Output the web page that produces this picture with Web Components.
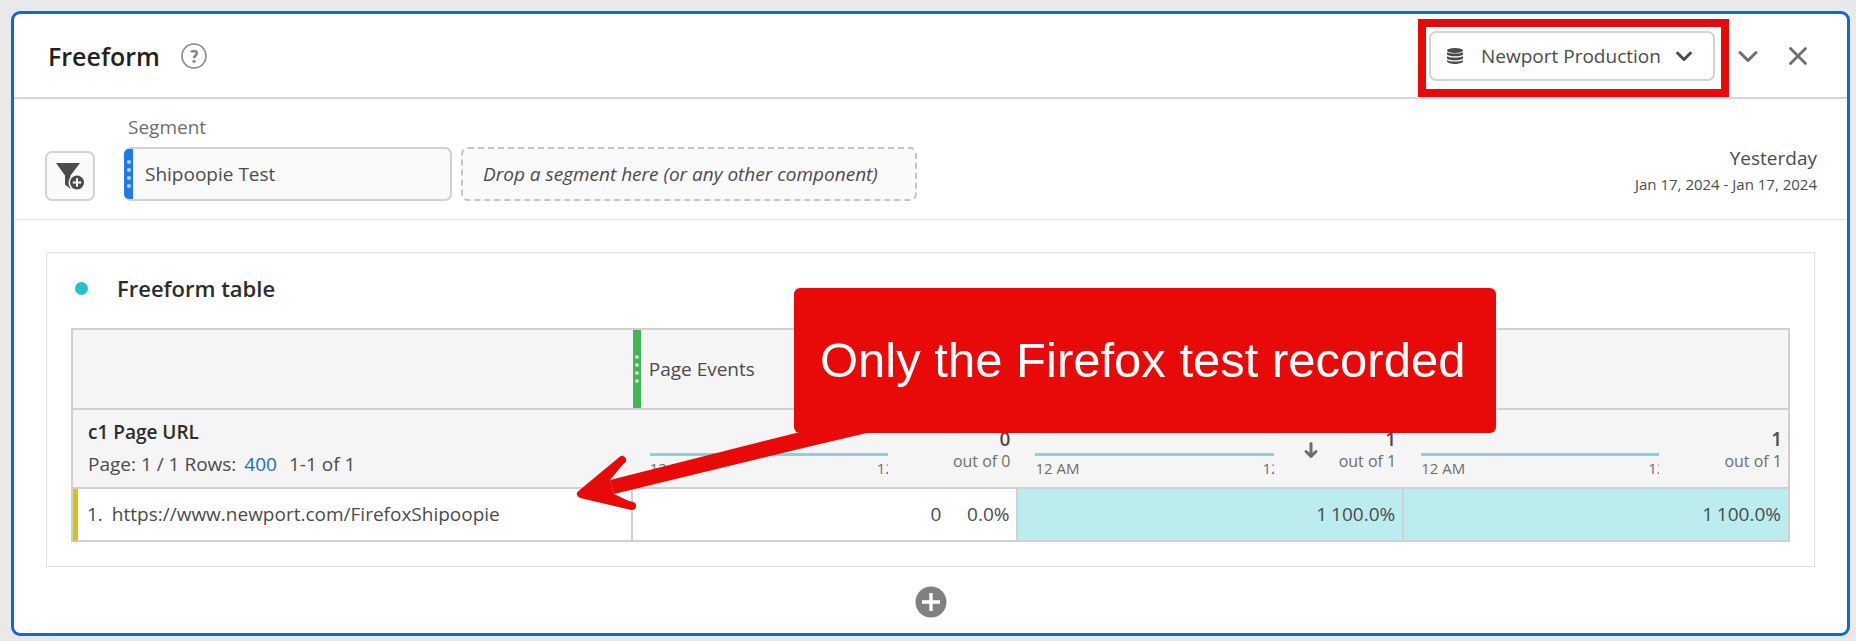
<!DOCTYPE html>
<html lang="en">
<head>
<meta charset="utf-8">
<meta name="viewport" content="width=device-width, initial-scale=1">
<title>Freeform</title>
<style>
    body {
        margin: 0;
        padding: 11px 6px 4px 11px;
        background: #e9e9e9;
        color: #4b4b4b;
        font-family: "Open Sans", "Noto Sans", sans-serif;
        font-size: 19px;
        line-height: 24px;
    }
</style>
</head>
<body>
<workspace-panel>
    <panel-header slot="header" heading="Freeform">
        <suite-picker suite="Newport Production"></suite-picker>
    </panel-header>
    <segment-bar slot="segments">
        <segment-chip>Shipoopie Test</segment-chip>
        <span slot="range">Yesterday</span>
        <span slot="dates">Jan 17, 2024 - Jan 17, 2024</span>
    </segment-bar>
    <viz-card heading="Freeform table">
        <freeform-table></freeform-table>
        <callout-note slot="note">Only the Firefox test recorded</callout-note>
    </viz-card>
</workspace-panel>

<script>
class WorkspacePanel extends HTMLElement {
    constructor() {
        super();
        this.attachShadow({ mode: 'open' });
    }

    connectedCallback() {
        this.shadowRoot.innerHTML = `
            <style>
                :host {
                    display: block;
                    background: #fff;
                    border: 3px solid #1268d3;
                    border-radius: 9px;
                }
                .content {
                    padding: 32px 32px 0;
                }
                .footer {
                    display: flex;
                    justify-content: center;
                    padding: 19px 0 15px;
                }
                button {
                    display: flex;
                    padding: 0;
                    border: none;
                    background: none;
                    cursor: pointer;
                }
            </style>
            <slot name="header"></slot>
            <slot name="segments"></slot>
            <div class="content"><slot></slot></div>
            <div class="footer">
                <button aria-label="Add visualization">
                    <svg width="32" height="32" viewBox="0 0 32 32">
                        <circle cx="16" cy="16" r="15.5" fill="#808080"/>
                        <path d="M16 7v18M7 16h18" stroke="#fff" stroke-width="3.4"/>
                    </svg>
                </button>
            </div>
        `;
    }
}
customElements.define('workspace-panel', WorkspacePanel);

class PanelHeader extends HTMLElement {
    constructor() {
        super();
        this.attachShadow({ mode: 'open' });
    }

    connectedCallback() {
        const heading = this.getAttribute('heading');

        this.shadowRoot.innerHTML = `
            <style>
                :host {
                    display: flex;
                    align-items: center;
                    padding: 17px 37px 16px 34px;
                    border-bottom: 2px solid #d6d6d6;
                }
                h1 {
                    margin: 0 20px 0 0;
                    font-size: 25px;
                    line-height: 32px;
                    font-weight: 600;
                    color: #222;
                }
                button {
                    display: flex;
                    padding: 0;
                    border: none;
                    background: none;
                    cursor: pointer;
                }
                .actions {
                    display: flex;
                    align-items: center;
                    margin-left: auto;
                }
                .collapse {
                    margin: 0 26px 0 21px;
                }
            </style>
            <h1>${heading}</h1>
            <button aria-label="Help">
                <svg width="28" height="28" viewBox="0 0 28 28" fill="none" stroke="#868686">
                    <circle cx="14" cy="14" r="12" stroke-width="1.6"/>
                    <path d="M11 10.2c.8-.9 1.8-1.3 3-1.3 1.7 0 2.9.9 2.9 2.4 0 2.1-2.9 2.3-2.9 5" stroke-width="2.5"/>
                    <circle cx="14" cy="19.3" r="1.6" fill="#868686" stroke="none"/>
                </svg>
            </button>
            <div class="actions">
                <slot></slot>
                <button class="collapse" aria-label="Collapse">
                    <svg width="24" height="24" viewBox="0 0 24 24" fill="none" stroke="#6e6e6e" stroke-width="3" stroke-linecap="round" stroke-linejoin="round">
                        <path d="M4 8.5l8 8 8-8"/>
                    </svg>
                </button>
                <button aria-label="Close">
                    <svg width="24" height="24" viewBox="0 0 24 24" fill="none" stroke="#6e6e6e" stroke-width="2.8" stroke-linecap="round">
                        <path d="M4.5 4.5l15 15M19.5 4.5l-15 15"/>
                    </svg>
                </button>
            </div>
        `;
    }
}
customElements.define('panel-header', PanelHeader);

class SuitePicker extends HTMLElement {
    constructor() {
        super();
        this.attachShadow({ mode: 'open' });
    }

    connectedCallback() {
        const suite = this.getAttribute('suite');

        this.shadowRoot.innerHTML = `
            <style>
                :host {
                    display: block;
                    position: relative;
                }
                select {
                    appearance: none;
                    box-sizing: border-box;
                    width: 286px;
                    height: 50px;
                    padding: 0 50px 0 50px;
                    border: 2px solid #d3d3d3;
                    border-radius: 7px;
                    background: #fff;
                    color: #4b4b4b;
                    font: inherit;
                    cursor: pointer;
                }
                svg {
                    position: absolute;
                    top: 50%;
                    transform: translateY(-50%);
                    pointer-events: none;
                }
                .stack {
                    left: 18px;
                }
                .arrow {
                    right: 21px;
                }
                /* red frame that points out the selected suite */
                .frame {
                    position: absolute;
                    inset: -12px -14px -16px -11px;
                    border: 8px solid #e80909;
                    pointer-events: none;
                }
            </style>
            <select aria-label="Report suite">
                <option>${suite}</option>
            </select>
            <svg class="stack" width="16" height="16" viewBox="0 0 16 16" fill="#4b4b4b">
                <ellipse cx="8" cy="2.5" rx="8" ry="2.5"/>
                <path d="M0 4.3c2 1.7 14 1.7 16 0v2.2c-1.5 2.4-14.5 2.4-16 0z"/>
                <path d="M0 8.3c2 1.8 14 1.8 16 0v2.2c-1.5 2.4-14.5 2.4-16 0z"/>
                <path d="M0 12.2c2 1.8 14 1.8 16 0v1.3c-1.5 3.3-14.5 3.3-16 0z"/>
            </svg>
            <svg class="arrow" width="20" height="20" viewBox="0 0 20 20" fill="none" stroke="#4b4b4b" stroke-width="3" stroke-linecap="round" stroke-linejoin="round">
                <path d="M3.5 7l6.5 6.5L16.5 7"/>
            </svg>
            <div class="frame"></div>
        `;
    }
}
customElements.define('suite-picker', SuitePicker);

class SegmentBar extends HTMLElement {
    constructor() {
        super();
        this.attachShadow({ mode: 'open' });
    }

    connectedCallback() {
        this.shadowRoot.innerHTML = `
            <style>
                :host {
                    display: flex;
                    align-items: flex-end;
                    padding: 12px 30px 18px 31px;
                    border-bottom: 1px solid #e4e4e4;
                }
                .filter {
                    box-sizing: border-box;
                    display: flex;
                    align-items: center;
                    justify-content: center;
                    width: 50px;
                    height: 50px;
                    margin-right: 29px;
                    padding: 0;
                    border: 2px solid #d3d3d3;
                    border-radius: 7px;
                    background: #fafafa;
                    cursor: pointer;
                }
                .label {
                    padding: 4px 0 8px 4px;
                    color: #6e6e6e;
                }
                .drop {
                    box-sizing: border-box;
                    margin-left: 9px;
                    padding: 13px 37px 13px 20px;
                    border: 2px dashed #c4c4c4;
                    border-radius: 7px;
                    background: #fafafa;
                    font-style: italic;
                }
                .range {
                    display: flex;
                    flex-direction: column;
                    margin-left: auto;
                    padding-bottom: 3px;
                    text-align: right;
                }
                .dates {
                    font-size: 15px;
                    line-height: 28px;
                }
            </style>
            <button class="filter" aria-label="Add segment">
                <svg width="30" height="30" viewBox="0 0 30 30">
                    <path d="M1 2h24l-9.5 12.5V28L10 23.5v-9z" fill="#4b4b4b"/>
                    <circle cx="22" cy="21.5" r="8.5" fill="#fafafa"/>
                    <circle cx="22" cy="21.5" r="7" fill="#4b4b4b"/>
                    <path d="M22 17.3v8.4M17.8 21.5h8.4" stroke="#fff" stroke-width="2"/>
                </svg>
            </button>
            <div>
                <div class="label">Segment</div>
                <slot></slot>
            </div>
            <div class="drop">Drop a segment here (or any other component)</div>
            <div class="range">
                <slot name="range"></slot>
                <div class="dates"><slot name="dates"></slot></div>
            </div>
        `;
    }
}
customElements.define('segment-bar', SegmentBar);

class SegmentChip extends HTMLElement {
    constructor() {
        super();
        this.attachShadow({ mode: 'open' });
    }

    connectedCallback() {
        this.shadowRoot.innerHTML = `
            <style>
                :host {
                    box-sizing: border-box;
                    display: flex;
                    width: 328px;
                    height: 54px;
                    border: 2px solid #d0d0d0;
                    border-left: none;
                    border-radius: 7px;
                    background: #fafafa;
                    line-height: 50px;
                }
                .handle {
                    display: flex;
                    flex-direction: column;
                    justify-content: center;
                    align-items: center;
                    gap: 4px;
                    width: 9px;
                    margin-right: 12px;
                    border-radius: 5px 0 0 5px;
                    background: #1f7ae8;
                }
                i {
                    width: 4px;
                    height: 4px;
                    border-radius: 50%;
                    background: #a9d0fb;
                }
            </style>
            <div class="handle"><i></i><i></i><i></i><i></i></div>
            <slot></slot>
        `;
    }
}
customElements.define('segment-chip', SegmentChip);

class VizCard extends HTMLElement {
    constructor() {
        super();
        this.attachShadow({ mode: 'open' });
    }

    connectedCallback() {
        const heading = this.getAttribute('heading');

        this.shadowRoot.innerHTML = `
            <style>
                :host {
                    display: block;
                    position: relative;
                    padding: 0 24px 24px;
                    border: 1px solid #e0e0e0;
                }
                .title {
                    display: flex;
                    align-items: center;
                    gap: 29px;
                    padding: 19px 4px 24px;
                }
                .dot {
                    width: 13px;
                    height: 13px;
                    border-radius: 50%;
                    background: #26c0c7;
                }
                h2 {
                    margin: 0;
                    font-size: 22px;
                    line-height: 32px;
                    font-weight: 600;
                    color: #2c2c2c;
                }
            </style>
            <div class="title">
                <span class="dot"></span>
                <h2>${heading}</h2>
            </div>
            <slot></slot>
            <slot name="note"></slot>
        `;
    }
}
customElements.define('viz-card', VizCard);

class MetricTotal extends HTMLElement {
    constructor() {
        super();
        this.attachShadow({ mode: 'open' });
    }

    connectedCallback() {
        const total = this.getAttribute('total');
        const sorted = this.hasAttribute('sorted');

        this.shadowRoot.innerHTML = `
            <style>
                :host {
                    display: flex;
                    align-items: flex-start;
                    color: #6e6e6e;
                    font-weight: 400;
                }
                .spark {
                    flex: 0 0 66%;
                    margin-top: 25px;
                    border-top: 3px solid #86d3d9;
                }
                .axis {
                    display: flex;
                    justify-content: space-between;
                    font-size: 15px;
                    line-height: 24px;
                    white-space: nowrap;
                }
                /* the end label is cut where the sparkline stops */
                .end {
                    width: 11px;
                    overflow: hidden;
                }
                svg {
                    margin: 13px 0 0 28px;
                }
                .sum {
                    margin-left: auto;
                    text-align: right;
                    font-size: 16px;
                    line-height: 22px;
                }
                b {
                    display: block;
                    font-size: 19px;
                    font-weight: 600;
                    color: #4b4b4b;
                }
            </style>
            <div class="spark">
                <div class="axis"><span>12 AM</span><span class="end">12 AM</span></div>
            </div>
            ${sorted ? `
            <svg width="18" height="18" viewBox="0 0 18 18" fill="none" stroke="#6e6e6e" stroke-width="3" stroke-linecap="round" stroke-linejoin="round">
                <path d="M9 2.5v13M4 10.5l5 5 5-5"/>
            </svg>` : ''}
            <div class="sum"><b>${total}</b>out of ${total}</div>
        `;
    }
}
customElements.define('metric-total', MetricTotal);

class FreeformTable extends HTMLElement {
    constructor() {
        super();
        this.attachShadow({ mode: 'open' });
    }

    connectedCallback() {
        this.shadowRoot.innerHTML = `
            <style>
                :host {
                    display: block;
                }
                table {
                    width: 100%;
                    table-layout: fixed;
                    border-spacing: 0;
                    border: solid #d0d0d0;
                    border-width: 2px 0 0 2px;
                }
                .names {
                    width: 32.6%;
                }
                th, td {
                    padding: 0;
                    border-bottom: 2px solid #d0d0d0;
                    text-align: left;
                    font-weight: 400;
                }
                th {
                    background: #f5f5f5;
                }
                th:last-child, td {
                    border-right: 2px solid #d0d0d0;
                }
                .metric {
                    display: flex;
                    align-items: center;
                    height: 78px;
                }
                .handle {
                    display: flex;
                    flex-direction: column;
                    justify-content: center;
                    align-items: center;
                    gap: 4px;
                    width: 8px;
                    height: 78px;
                    margin-right: 8px;
                    background: #44b556;
                }
                .handle i {
                    width: 4px;
                    height: 4px;
                    border-radius: 50%;
                    background: #b4e8bc;
                }
                .dimension {
                    padding: 6px 15px 7px;
                }
                .dimension b {
                    display: block;
                    font-weight: 600;
                    line-height: 32px;
                    color: #2c2c2c;
                }
                .pager {
                    display: flex;
                    line-height: 32px;
                }
                .pager a {
                    margin: 0 12px 0 8px;
                    color: #2467cf;
                    text-decoration: none;
                }
                .total {
                    padding: 18px 8px 0 17px;
                    vertical-align: top;
                }
                .total:last-child {
                    padding-right: 6px;
                }
                .page {
                    border-left: 5px solid #dcbf12;
                    padding-left: 9px;
                }
                .page span {
                    margin-right: 9px;
                }
                td {
                    line-height: 51px;
                }
                .value {
                    padding-right: 7px;
                    text-align: right;
                }
                .value span {
                    display: inline-block;
                    min-width: 68px;
                }
                .full {
                    background: #bbecee;
                }
            </style>
            <table>
                <colgroup><col class="names"><col><col><col></colgroup>
                <thead>
                    <tr>
                        <th></th>
                        <th>
                            <div class="metric">
                                <div class="handle"><i></i><i></i><i></i><i></i></div>
                                Page Events
                            </div>
                        </th>
                        <th></th>
                        <th></th>
                    </tr>
                    <tr>
                        <th class="dimension">
                            <b>c1 Page URL</b>
                            <div class="pager">Page: 1 / 1 Rows: <a href="#rows">400</a> 1-1 of 1</div>
                        </th>
                        <th class="total"><metric-total total="0"></metric-total></th>
                        <th class="total"><metric-total total="1" sorted></metric-total></th>
                        <th class="total"><metric-total total="1"></metric-total></th>
                    </tr>
                </thead>
                <tbody>
                    <tr>
                        <td class="page"><span>1.</span>https://www.newport.com/FirefoxShipoopie</td>
                        <td class="value">0<span>0.0%</span></td>
                        <td class="value full">1<span>100.0%</span></td>
                        <td class="value full">1<span>100.0%</span></td>
                    </tr>
                </tbody>
            </table>
        `;
    }
}
customElements.define('freeform-table', FreeformTable);

class CalloutNote extends HTMLElement {
    constructor() {
        super();
        this.attachShadow({ mode: 'open' });
    }

    connectedCallback() {
        this.shadowRoot.innerHTML = `
            <style>
                /* floats over the table, the arrow hangs from its lower left corner */
                :host {
                    position: absolute;
                    top: 35px;
                    left: 747px;
                    padding: 44px 31px 45px 26px;
                    border-radius: 6px;
                    background: #e80909;
                    color: #fff;
                    font-family: "Liberation Sans", Arial, sans-serif;
                    font-size: 49px;
                    line-height: 56px;
                    white-space: nowrap;
                }
                svg {
                    position: absolute;
                    top: 100%;
                    left: -220px;
                    margin-top: -6px;
                }
            </style>
            <slot></slot>
            <svg width="300" height="86" viewBox="0 0 300 86" fill="#e80909">
                <path d="M226 5L36 53 40 67 246 17 297 5z"/>
                <path d="M48 33L7 67 58 79" fill="none" stroke="#e80909" stroke-width="8" stroke-linecap="round" stroke-linejoin="round"/>
                <path d="M7 67L50 36 36 53 40 67 59 76z"/>
            </svg>
        `;
    }
}
customElements.define('callout-note', CalloutNote);
</script>
</body>
</html>
